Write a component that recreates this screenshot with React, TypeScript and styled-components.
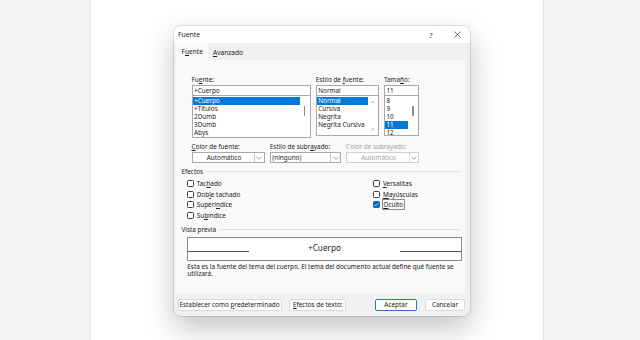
import React from "react";
import styled, { createGlobalStyle } from "styled-components";

const GlobalStyle = createGlobalStyle`
  html, body { margin: 0; padding: 0; background: #f3f3f3; }
  body { font-family: "Noto Sans", "Open Sans", sans-serif; color: #1b1b1b; }
  * { box-sizing: border-box; }
`;

const Screen = styled.div`
  width: 640px;
  height: 340px;
  display: flex;
  padding-left: 90px;
  background: #f3f3f3;
  overflow: hidden;
`;

const Page = styled.div`
  width: 454px;
  height: 340px;
  background: #ffffff;
  border-left: 1px solid #e3e3e3;
  border-right: 1px solid #e3e3e3;
  padding: 26px 0 0 83px;
`;

const Dialog = styled.div`
  width: 296px;
  height: 290px;
  background: #f0f0f0;
  border-radius: 7px;
  box-shadow: 0 12px 30px rgba(0, 0, 0, 0.24), 0 0 0 1px rgba(0, 0, 0, 0.1);
  display: flex;
  flex-direction: column;
  overflow: hidden;
  font-size: 6.4px;
`;

const TitleBar = styled.div`
  height: 17px;
  background: #ffffff;
  display: flex;
  align-items: center;
  padding-left: 4px;
  font-size: 6.8px;
`;

const TitleText = styled.span`
  flex: 1;
`;

const TitleButton = styled.span`
  width: 26px;
  display: flex;
  justify-content: center;
  align-items: center;
  color: #333;
  font-size: 7.5px;
`;

const TabsRow = styled.div`
  height: 17px;
  display: flex;
  align-items: stretch;
  padding-left: 2px;
`;

const Tab = styled.div<{ $active?: boolean }>`
  padding: 0 5px 0 ${(p) => (p.$active ? 5.5 : 5)}px;
  display: flex;
  align-items: center;
  padding-top: ${(p) => (p.$active ? 0 : 2)}px;
  background: ${(p) => (p.$active ? "#f9f9f9" : "transparent")};
  font-size: 6.6px;
`;

const Panel = styled.div`
  margin: 0 5px 0 2px;
  height: 233px;
  background: #f9f9f9;
  padding: 16px 3.4px 0 5.5px;
  display: flex;
  flex-direction: column;
`;

const Inner = styled.div`
  padding-left: 10px;
  display: flex;
  flex-direction: column;
`;

const TopGrid = styled.div`
  display: grid;
  grid-template-columns: 119px 63px 35px;
  column-gap: 5.2px;
  align-items: start;
`;

const Field = styled.div`
  display: flex;
  flex-direction: column;
`;

const Label = styled.div<{ $disabled?: boolean }>`
  height: 8px;
  line-height: 8px;
  margin-bottom: 1px;
  white-space: nowrap;
  color: ${(p) => (p.$disabled ? "#a3a3a3" : "#1b1b1b")};
`;

const TextInput = styled.div`
  height: 11px;
  border: 1px solid #a9a9a9;
  background: #fff;
  padding-left: 1.5px;
  line-height: 9px;
  white-space: nowrap;
`;

const ListBox = styled.div<{ $h: number }>`
  height: ${(p) => p.$h}px;
  border: 1px solid #a9a9a9;
  border-top: none;
  background: #fff;
  display: flex;
  overflow: hidden;
`;

const Items = styled.div`
  flex: 1;
  padding-top: 0.7px;
  display: flex;
  flex-direction: column;
`;

const Item = styled.div<{ $sel?: boolean }>`
  height: 8px;
  line-height: 8px;
  padding-left: 1px;
  margin-left: 0.5px;
  white-space: nowrap;
  background: ${(p) => (p.$sel ? "#0078d7" : "transparent")};
  color: ${(p) => (p.$sel ? "#ffffff" : "#1b1b1b")};
`;

const Track = styled.div`
  width: 10px;
  display: flex;
  flex-direction: column;
  align-items: center;
`;

const Thumb = styled.div`
  width: 1.4px;
  height: 10px;
  margin-top: 10px;
  background: #8a8a8a;
  border-radius: 1px;
`;

const ArrowTrack = styled(Track)`
  justify-content: space-between;
  padding: 3px 0 3px;
  color: #b8b8b8;
  font-size: 4.5px;
  line-height: 5px;
`;

const DropGrid = styled.div`
  display: grid;
  grid-template-columns: 73px 71px 73px;
  column-gap: 5.3px;
  margin-top: 5px;
`;

const Drop = styled.div<{ $disabled?: boolean }>`
  height: 11px;
  display: flex;
  border: 1px solid ${(p) => (p.$disabled ? "#cfcfcf" : "#a9a9a9")};
  background: #fff;
  color: ${(p) => (p.$disabled ? "#a3a3a3" : "#1b1b1b")};
`;

const DropText = styled.div<{ $center?: boolean }>`
  flex: 1;
  line-height: 9px;
  padding-left: 1.5px;
  text-align: ${(p) => (p.$center ? "center" : "left")};
  white-space: nowrap;
`;

const DropArrow = styled.div<{ $disabled?: boolean }>`
  width: 9.5px;
  border-left: 1px solid ${(p) => (p.$disabled ? "#dedede" : "#c4c4c4")};
  display: flex;
  align-items: center;
  justify-content: center;
`;

const SectionHeader = styled.div<{ $mt: number }>`
  display: flex;
  align-items: center;
  height: 8px;
  margin-top: ${(p) => p.$mt}px;
  margin-right: 1.6px;
  gap: 3px;
  white-space: nowrap;
`;

const SectionLine = styled.div`
  flex: 1;
  height: 1px;
  background: #e1e1e1;
`;

const Effects = styled.div`
  display: grid;
  grid-template-columns: 186.2px auto;
  padding-left: 5.8px;
  margin-top: 2.6px;
`;

const CheckCol = styled.div`
  display: flex;
  flex-direction: column;
`;

const CheckRow = styled.div`
  height: 10.75px;
  display: flex;
  align-items: center;
  gap: 2.4px;
  white-space: nowrap;
`;

const Box = styled.div<{ $checked?: boolean }>`
  width: 7px;
  height: 7px;
  border-radius: 1.5px;
  border: 0.8px solid ${(p) => (p.$checked ? "#0067c0" : "#3a3a3a")};
  background: ${(p) => (p.$checked ? "#0067c0" : "#fff")};
  display: flex;
  align-items: center;
  justify-content: center;
`;

const Focused = styled.span`
  outline: 0.8px solid #8c8c8c;
  padding: 0 0.5px;
`;

const Preview = styled.div`
  margin: 3.6px 0 0 5.8px;
  height: 23.4px;
  border: 1px solid #8a8a8a;
  background: #fff;
  display: flex;
  flex-direction: column;
`;

const PreviewRow = styled.div`
  height: 14px;
  display: flex;
  align-items: flex-end;
`;

const BaseLine = styled.div`
  width: 61px;
  border-bottom: 1px solid #555;
`;

const PreviewText = styled.div`
  flex: 1;
  text-align: center;
  font-size: 8.2px;
  line-height: 10px;
  margin-bottom: -1px;
`;

const Description = styled.div`
  margin: 1.8px 0 0 5.8px;
  width: 272px;
  line-height: 7.7px;
`;

const ButtonRow = styled.div`
  flex: 1;
  display: flex;
  align-items: center;
  padding: 0 5px 0 3.5px;
  gap: 7.8px;
`;

const Button = styled.div<{ $w: number; $primary?: boolean }>`
  width: ${(p) => p.$w}px;
  height: 12px;
  border-radius: 2px;
  background: #fdfdfd;
  border: ${(p) => (p.$primary ? "1px solid #2a73c4" : "1px solid #dadada")};
  display: flex;
  align-items: center;
  justify-content: center;
  white-space: nowrap;
`;

const Spacer = styled.div`
  flex: 1;
`;

const Chevron = () => (
  <svg width="6" height="4" viewBox="0 0 6 4">
    <path d="M0.5 0.8 L3 3.2 L5.5 0.8" fill="none" stroke="#777" strokeWidth="0.7" />
  </svg>
);

const fonts = ["+Cuerpo", "+Títulos", "2Dumb", "3Dumb", "Abys"];
const styles = ["Normal", "Cursiva", "Negrita", "Negrita Cursiva"];
const sizes = ["8", "9", "10", "11", "12"];

export default function App() {
  return (
    <>
      <GlobalStyle />
      <Screen>
        <Page>
          <Dialog>
            <TitleBar>
              <TitleText>Fuente</TitleText>
              <TitleButton>?</TitleButton>
              <TitleButton>
                <svg width="7" height="7" viewBox="0 0 7 7">
                  <path d="M0.5 0.5 L6.5 6.5 M6.5 0.5 L0.5 6.5" stroke="#333" strokeWidth="0.7" />
                </svg>
              </TitleButton>
            </TitleBar>
            <TabsRow>
              <Tab $active>
                <span>
                  F<u>u</u>ente
                </span>
              </Tab>
              <Tab>
                <span>
                  <u>A</u>vanzado
                </span>
              </Tab>
            </TabsRow>
            <Panel>
              <Inner>
                <TopGrid>
                  <Field>
                    <Label>
                      Fu<u>e</u>nte:
                    </Label>
                    <TextInput>+Cuerpo</TextInput>
                    <ListBox $h={42}>
                      <Items>
                        {fonts.map((f, i) => (
                          <Item key={f} $sel={i === 0}>
                            {f}
                          </Item>
                        ))}
                      </Items>
                      <Track>
                        <Thumb />
                      </Track>
                    </ListBox>
                  </Field>
                  <Field>
                    <Label>
                      Estilo de <u>f</u>uente:
                    </Label>
                    <TextInput>Normal</TextInput>
                    <ListBox $h={39.7}>
                      <Items>
                        {styles.map((s, i) => (
                          <Item key={s} $sel={i === 0}>
                            {s}
                          </Item>
                        ))}
                      </Items>
                      <ArrowTrack>
                        <span>▲</span>
                        <span>▼</span>
                      </ArrowTrack>
                    </ListBox>
                  </Field>
                  <Field>
                    <Label>
                      Tama<u>ñ</u>o:
                    </Label>
                    <TextInput>11</TextInput>
                    <ListBox $h={39.7}>
                      <Items>
                        {sizes.map((s) => (
                          <Item key={s} $sel={s === "11"}>
                            {s}
                          </Item>
                        ))}
                      </Items>
                      <Track>
                        <Thumb />
                      </Track>
                    </ListBox>
                  </Field>
                </TopGrid>
                <DropGrid>
                  <Field>
                    <Label>
                      <u>C</u>olor de fuente:
                    </Label>
                    <Drop>
                      <DropText $center>Automático</DropText>
                      <DropArrow>
                        <Chevron />
                      </DropArrow>
                    </Drop>
                  </Field>
                  <Field>
                    <Label>
                      Estilo de subr<u>a</u>yado:
                    </Label>
                    <Drop>
                      <DropText>(ninguno)</DropText>
                      <DropArrow>
                        <Chevron />
                      </DropArrow>
                    </Drop>
                  </Field>
                  <Field>
                    <Label $disabled>Color de subrayado:</Label>
                    <Drop $disabled>
                      <DropText $center>Automático</DropText>
                      <DropArrow $disabled>
                        <Chevron />
                      </DropArrow>
                    </Drop>
                  </Field>
                </DropGrid>
              </Inner>
              <SectionHeader $mt={4.3}>
                <span>Efectos</span>
                <SectionLine />
              </SectionHeader>
              <Effects>
                <CheckCol>
                  <CheckRow>
                    <Box />
                    <span>
                      Tac<u>h</u>ado
                    </span>
                  </CheckRow>
                  <CheckRow>
                    <Box />
                    <span>
                      Dob<u>l</u>e tachado
                    </span>
                  </CheckRow>
                  <CheckRow>
                    <Box />
                    <span>
                      Superí<u>n</u>dice
                    </span>
                  </CheckRow>
                  <CheckRow>
                    <Box />
                    <span>
                      Su<u>b</u>índice
                    </span>
                  </CheckRow>
                </CheckCol>
                <CheckCol>
                  <CheckRow>
                    <Box />
                    <span>
                      <u>V</u>ersalitas
                    </span>
                  </CheckRow>
                  <CheckRow>
                    <Box />
                    <span>
                      <u>M</u>ayúsculas
                    </span>
                  </CheckRow>
                  <CheckRow>
                    <Box $checked>
                      <svg width="5" height="5" viewBox="0 0 5 5">
                        <path d="M0.8 2.6 L2 3.7 L4.3 1.2" fill="none" stroke="#fff" strokeWidth="0.8" />
                      </svg>
                    </Box>
                    <Focused>
                      <u>O</u>culto
                    </Focused>
                  </CheckRow>
                </CheckCol>
              </Effects>
              <SectionHeader $mt={5}>
                <span>Vista previa</span>
                <SectionLine />
              </SectionHeader>
              <Preview>
                <PreviewRow>
                  <BaseLine />
                  <PreviewText>+Cuerpo</PreviewText>
                  <BaseLine />
                </PreviewRow>
              </Preview>
              <Description>
                Esta es la fuente del tema del cuerpo. El tema del documento actual define qué fuente se
                utilizará.
              </Description>
            </Panel>
            <ButtonRow>
              <Button $w={104}>
                <span>
                  Establecer como <u>p</u>redeterminado
                </span>
              </Button>
              <Button $w={57}>
                <span>
                  <u>E</u>fectos de texto:
                </span>
              </Button>
              <Spacer />
              <Button $w={42.5} $primary>
                Aceptar
              </Button>
              <Button $w={40}>Cancelar</Button>
            </ButtonRow>
          </Dialog>
        </Page>
      </Screen>
    </>
  );
}
